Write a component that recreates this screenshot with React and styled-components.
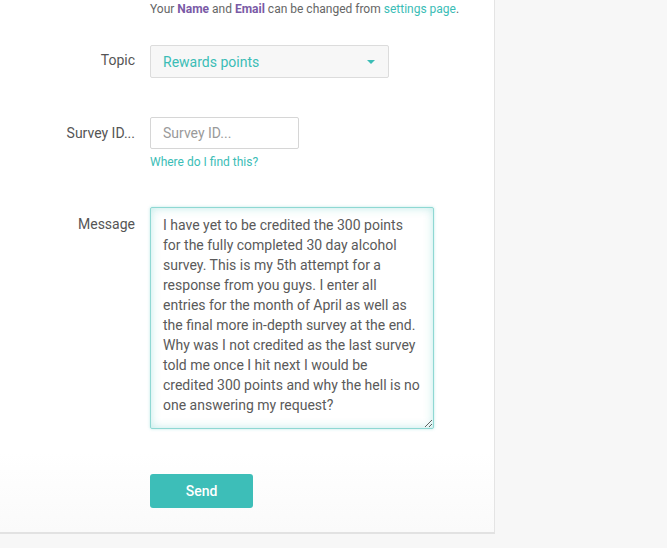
import styled, { createGlobalStyle } from "styled-components";

const GlobalStyle = createGlobalStyle`
    html, body {
        margin: 0;
        padding: 0;
        background: #f7f7f7;
        font-family: Roboto, "Liberation Sans", Arial, sans-serif;
    }
`;

const Page = styled.div`
    width: 667px;
    height: 548px;
    background: #f7f7f7;
    overflow: hidden;
`;

const Card = styled.div`
    width: 495px;
    height: 534px;
    box-sizing: border-box;
    background: linear-gradient(to bottom, #fff 85%, #fafafa 100%);
    border-right: 1px solid #e4e4e4;
    border-bottom: 2px solid #e2e2e2;
    display: flex;
    flex-direction: column;
`;

const Row = styled.div`
    display: grid;
    grid-template-columns: 135px 1fr;
    column-gap: 15px;
    margin-top: ${(p) => p.$top || 0}px;
`;

const Label = styled.label`
    text-align: right;
    font-size: 14px;
    line-height: 20px;
    color: #555;
    padding-top: ${(p) => p.$pad || 0}px;
`;

const Note = styled.p`
    margin: 0;
    font-size: 12px;
    line-height: 18px;
    color: #666;
    grid-column: 2;

    b {
        color: #7a5aa6;
        font-weight: 700;
    }
`;

const TealLink = styled.a`
    color: #3bbdb6;
    text-decoration: none;
    font-size: 12px;
    cursor: pointer;
`;

const Field = styled.div`
    display: flex;
    flex-direction: column;
    align-items: flex-start;
`;

const SelectBox = styled.div`
    width: 239px;
    height: 33px;
    box-sizing: border-box;
    background: #f7f7f7;
    border: 1px solid #dcdcdc;
    border-radius: 2px;
    display: flex;
    align-items: center;
    justify-content: space-between;
    padding: 0 12px;
    font-size: 14px;
    color: #3bbdb6;
    cursor: pointer;
`;

const Caret = styled.span`
    width: 0;
    height: 0;
    border-left: 4px solid transparent;
    border-right: 4px solid transparent;
    border-top: 4px solid #3bbdb6;
    margin-right: 1px;
`;

const TextInput = styled.input`
    width: 149px;
    height: 32px;
    box-sizing: border-box;
    border: 1px solid #d6d6d6;
    border-radius: 2px;
    padding: 0 12px;
    font-family: inherit;
    font-size: 14px;
    color: #555;
    outline: none;

    &::placeholder {
        color: #9a9a9a;
    }
`;

const Help = styled(TealLink)`
    margin-top: 5px;
    line-height: 16px;
`;

const MessageArea = styled.textarea`
    width: 284px;
    height: 222px;
    box-sizing: border-box;
    border: 1px solid #8fd8d3;
    border-radius: 2px;
    box-shadow: inset 0 0 10px rgba(59, 189, 182, 0.32), 0 0 3px rgba(59, 189, 182, 0.35);
    padding: 7px 12px;
    font-family: inherit;
    font-size: 14px;
    line-height: 20px;
    color: #5a5a5a;
    outline: none;
    resize: both;
`;

const SendButton = styled.button`
    width: 103px;
    height: 34px;
    border: none;
    border-radius: 3px;
    background: #3dbeb8;
    color: #fff;
    font-family: inherit;
    font-size: 14px;
    font-weight: 500;
    cursor: pointer;
`;

const message =
    "I have yet to be credited the 300 points for the fully completed 30 day alcohol survey. This is my 5th attempt for a response from you guys. I enter all entries for the month of April as well as the final more in-depth survey at the end. Why was I not credited as the last survey told me once I hit next I would be credited 300 points and why the hell is no one answering my request?";

const App = () => {
    return (
        <Page>
            <GlobalStyle />
            <Card>
                <Row>
                    <Note>
                        Your <b>Name</b> and <b>Email</b> can be changed from{" "}
                        <TealLink>settings page</TealLink>.
                    </Note>
                </Row>

                <Row $top={27}>
                    <Label $pad={5}>Topic</Label>
                    <Field>
                        <SelectBox>
                            Rewards points
                            <Caret />
                        </SelectBox>
                    </Field>
                </Row>

                <Row $top={39}>
                    <Label $pad={6}>Survey ID...</Label>
                    <Field>
                        <TextInput placeholder="Survey ID..." />
                        <Help>Where do I find this?</Help>
                    </Field>
                </Row>

                <Row $top={37}>
                    <Label $pad={7}>Message</Label>
                    <Field>
                        <MessageArea defaultValue={message} />
                    </Field>
                </Row>

                <Row $top={45}>
                    <span />
                    <Field>
                        <SendButton>Send</SendButton>
                    </Field>
                </Row>
            </Card>
        </Page>
    );
};

export default App;
